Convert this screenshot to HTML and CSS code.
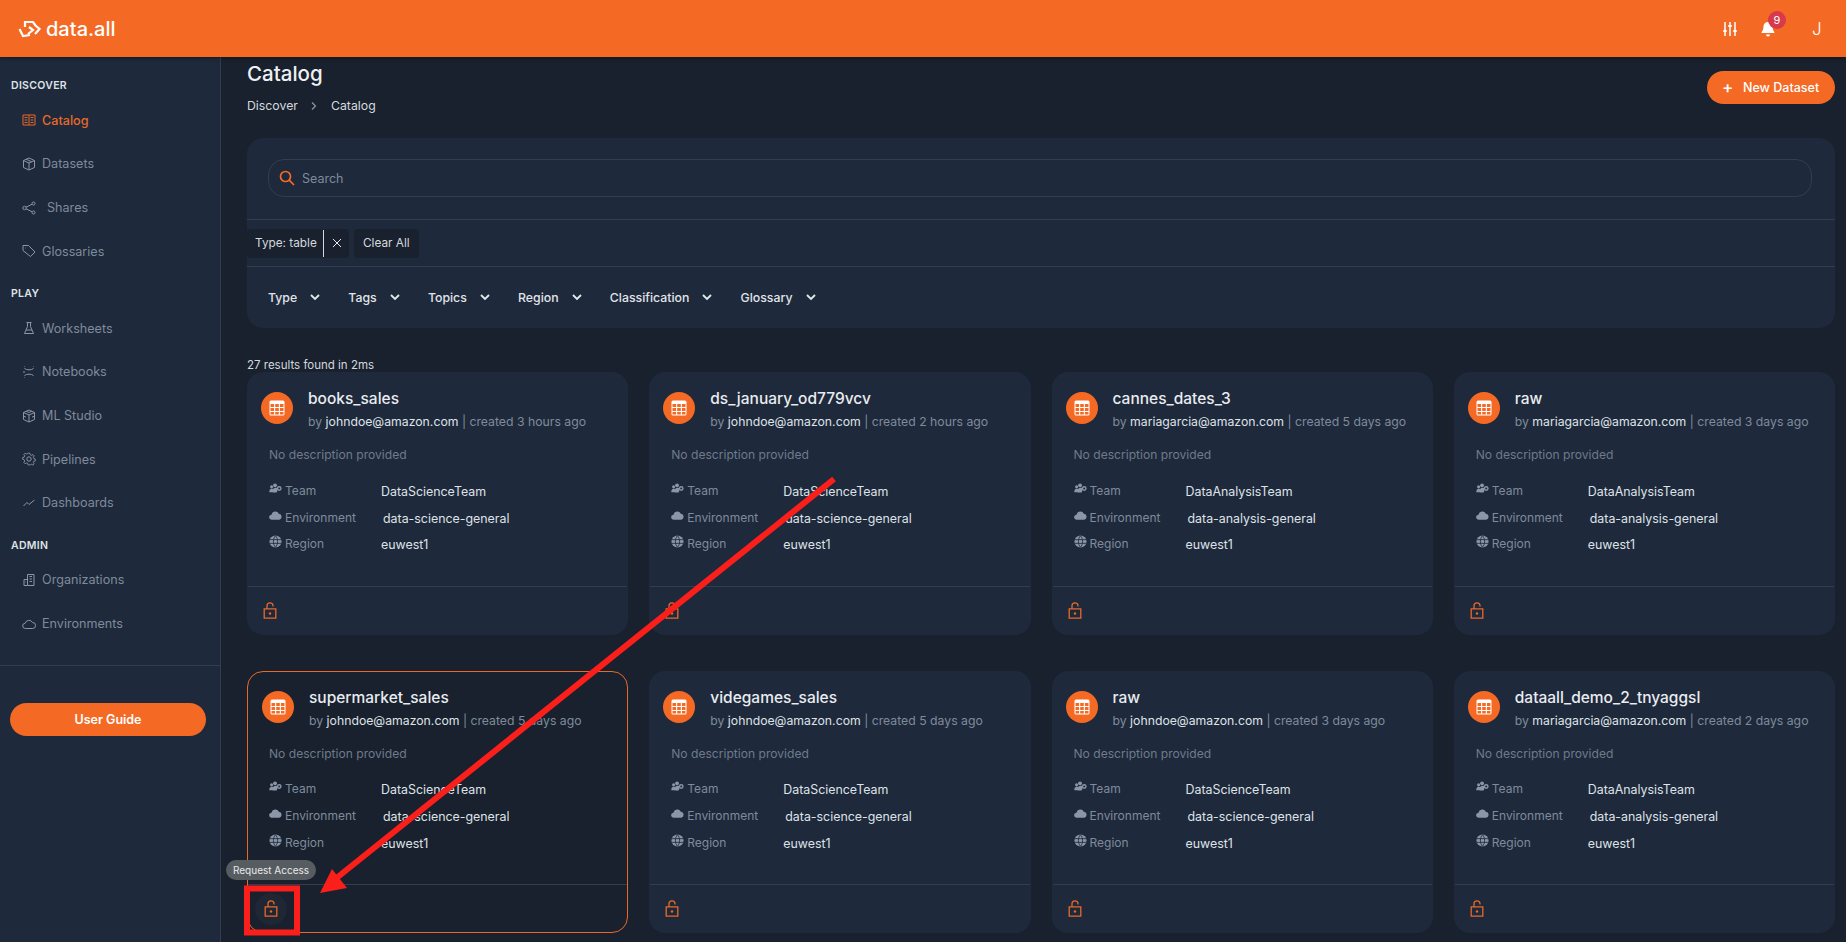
FILE: index.html
```html
<!doctype html>
<html>
<head>
<meta charset="utf-8">
<title>data.all - Catalog</title>
<link rel="stylesheet" href="styles.css">
</head>
<body>
<svg class="defs" width="0" height="0">
	<symbol id="i-table" viewBox="0 0 16 16">
		<rect x="0.5" y="0.5" width="15" height="15" rx="1.5" fill="#fff"/>
		<g fill="#f46a25">
			<rect x="1.5" y="4" width="3.6" height="3"/><rect x="6.2" y="4" width="3.6" height="3"/><rect x="10.9" y="4" width="3.6" height="3"/>
			<rect x="1.5" y="8" width="3.6" height="3"/><rect x="6.2" y="8" width="3.6" height="3"/><rect x="10.9" y="8" width="3.6" height="3"/>
			<rect x="1.5" y="12" width="3.6" height="2.5"/><rect x="6.2" y="12" width="3.6" height="2.5"/><rect x="10.9" y="12" width="3.6" height="2.5"/>
		</g>
	</symbol>
	<symbol id="i-lock" viewBox="0 0 14 17">
		<path d="M1.2 6.800h11.600v9.400H1.200z M4 6.800V3.800a3 3 0 0 1 6 0v.6" fill="none" stroke="#e8692a" stroke-width="1.300"/>
		<circle cx="7" cy="11.500" r="1.200" fill="#e8692a"/>
	</symbol>
	<symbol id="i-team" viewBox="0 0 14 12">
		<g fill="#8b97a8">
			<circle cx="2.800" cy="4.200" r="1.700"/><circle cx="6.500" cy="2.600" r="2.100"/><circle cx="11" cy="6" r="2.600"/>
			<path d="M0.300 9.500c0-2 1.200-3.300 2.500-3.300s2 .6 2 1.500v2.300H.3z M4 8.500c0-2 1.500-3.300 3-3.300s2 .5 2 1.500 0 3-1 3.500H4z"/>
		</g>
		<circle cx="11" cy="6" r="1.100" fill="#1e293b"/>
	</symbol>
	<symbol id="i-cloud" viewBox="0 0 14 10">
		<path d="M3 9.500a2.700 2.700 0 0 1-.4-5.400A4.300 4.300 0 0 1 10.600 3 3.300 3.300 0 0 1 11 9.500z" fill="#8b97a8"/>
	</symbol>
	<symbol id="i-globe" viewBox="0 0 14 14">
		<circle cx="7" cy="7" r="6.500" fill="#8b97a8"/>
		<path d="M.8 5h12.400M.8 9h12.400M7 .8C4 4 4 10 7 13.200M7 .8c3 3.200 3 9.200 0 12.400" fill="none" stroke="#1e293b" stroke-width=".9"/>
	</symbol>
	<symbol id="i-chev" viewBox="0 0 12 12">
		<path d="M2 4l4 4 4-4" fill="none" stroke="#e6e9ee" stroke-width="1.800"/>
	</symbol>
</svg>

<header class="topbar">
	<div class="brand">
		<svg class="brand-logo" viewBox="0 0 23 18" width="23" height="18">
			<path d="M7 7V2h8l2.500 3.500L21.500 9 17 14" fill="none" stroke="#fff" stroke-width="2.200"/>
			<path d="M11 7l4 3-5 4" fill="none" stroke="#fff" stroke-width="2.200"/>
			<path d="M1.500 9L5 16l7-1" fill="none" stroke="#fff" stroke-width="2.200"/>
		</svg>
		<span>data.all</span>
	</div>
	<div class="top-actions">
		<svg class="top-icon" viewBox="0 0 16 16" width="16" height="16">
			<path d="M3 1v14M8 1v14M13 1v14" stroke="#fff" stroke-width="1.500" fill="none"/>
			<path d="M1.300 9h3.400v2H1.300zM6.300 4h3.400v2H6.300zM11.300 9h3.400v2h-3.400z" fill="#fff"/>
		</svg>
		<div class="bell">
			<svg viewBox="0 0 14 16" width="14" height="16">
				<path d="M7 1a4.500 4.500 0 0 1 4.500 4.500c0 4 2 5 2 6.500H.5c0-1.500 2-2.500 2-6.500A4.500 4.500 0 0 1 7 1zM5 13.500h4a2 2 0 0 1-4 0z" fill="#fff"/>
			</svg>
			<span class="badge">9</span>
		</div>
		<span class="avatar">J</span>
	</div>
</header>

<div class="layout">
	<aside class="sidebar">
		<nav class="nav">
			<div class="nav-head">DISCOVER</div>
			<a class="nav-item active">
				<svg viewBox="0 0 14 14"><path d="M1 2h12v10H1zM7 2v10M2.500 4.500h3M2.500 7h3M2.500 9.500h3M8.500 4.500h3M8.500 7h3M8.500 9.500h3"/></svg>
				<span>Catalog</span>
			</a>
			<a class="nav-item">
				<svg viewBox="0 0 14 14"><path d="M7 1l5.500 2.500v7L7 13l-5.500-2.500v-7zM1.500 3.500L7 6l5.500-2.500M7 6v7M4.200 2.200l5.500 2.600"/></svg>
				<span>Datasets</span>
			</a>
			<a class="nav-item nav-shares">
				<svg viewBox="0 0 14 14"><circle cx="11.500" cy="2.500" r="1.500"/><circle cx="2.500" cy="7" r="1.700"/><circle cx="11.500" cy="11.500" r="1.500"/><path d="M4 6.200l6.200-3M4 7.800l6.200 3"/></svg>
				<span>Shares</span>
			</a>
			<a class="nav-item">
				<svg viewBox="0 0 14 14"><path d="M1 1.500h5.500l6.500 6.500-4.500 4.500L1 6.500zM3.500 4h.5"/></svg>
				<span>Glossaries</span>
			</a>
			<div class="nav-head">PLAY</div>
			<a class="nav-item">
				<svg viewBox="0 0 14 14"><path d="M4.500 1.500h5M5.500 1.500v4L2.500 12.500h9L8.500 5.500v-4M4 9h6"/></svg>
				<span>Worksheets</span>
			</a>
			<a class="nav-item">
				<svg viewBox="0 0 14 14"><path d="M2.500 3.500c2 1.800 7 1.800 9 0M2.500 10.500c2-1.800 7-1.800 9 0M2 6v2M2 1.500h.5M11.500 1.500h.5M2 12.500h.5"/></svg>
				<span>Notebooks</span>
			</a>
			<a class="nav-item">
				<svg viewBox="0 0 14 14"><path d="M7 1l5.500 2.500v7L7 13l-5.500-2.500v-7zM1.500 3.500L7 6l5.500-2.500M7 6v7M4.200 2.200L7 3.500l2.800-1.300M1.500 7L4 8.200M12.500 7L10 8.200"/></svg>
				<span>ML Studio</span>
			</a>
			<a class="nav-item">
				<svg viewBox="0 0 14 14"><circle cx="7" cy="7" r="2.200"/><path d="M6 1h2l.4 1.700 1.500.7 1.500-.9 1.300 1.500-.9 1.500.6 1.500 1.600.5v2l-1.600.4-.6 1.500.9 1.400-1.400 1.400-1.500-.9-1.400.6L8 14H6l-.4-1.600-1.500-.6-1.500.9-1.300-1.400.9-1.500-.6-1.500L0 7.800v-2l1.600-.4.6-1.500-.9-1.400 1.400-1.500 1.500.9 1.400-.6z" transform="translate(.7 .3) scale(.9)"/></svg>
				<span>Pipelines</span>
			</a>
			<a class="nav-item">
				<svg viewBox="0 0 14 14"><path d="M1.500 10L5 6.500l2 2L12.500 4"/></svg>
				<span>Dashboards</span>
			</a>
			<div class="nav-head">ADMIN</div>
			<a class="nav-item">
				<svg viewBox="0 0 14 14"><path d="M5.500 12.500v-11h6.500v11zM5.500 6.500H2v6h3.500M7.500 3.500h2.500M7.500 6h2.500M7.500 8.500h2.500M3.500 9h.5"/></svg>
				<span>Organizations</span>
			</a>
			<a class="nav-item">
				<svg viewBox="0 0 14 14"><path d="M3.500 11.500a2.600 2.600 0 0 1-.4-5.200A4 4 0 0 1 10.500 5.500a3 3 0 0 1 .2 6z"/></svg>
				<span>Environments</span>
			</a>
		</nav>
		<div class="side-foot">
			<button class="btn-guide">User Guide</button>
		</div>
	</aside>

	<main class="main">
		<div class="page-head">
			<div>
				<h1 class="page-title">Catalog</h1>
				<div class="crumbs">
					<span>Discover</span>
					<svg viewBox="0 0 10 10" width="10" height="10"><path d="M3 1.500L6.500 5 3 8.500" fill="none" stroke="#8b97a8" stroke-width="1.200"/></svg>
					<span>Catalog</span>
				</div>
			</div>
			<button class="btn-new"><span class="plus">+</span>New Dataset</button>
		</div>

		<section class="search-panel">
			<div class="search-row">
				<div class="search-box">
					<svg viewBox="0 0 16 16" width="16" height="16"><circle cx="6.500" cy="6.500" r="5" fill="none" stroke="#f46a25" stroke-width="1.700"/><path d="M10.200 10.200L15 15" stroke="#f46a25" stroke-width="1.700"/></svg>
					<span>Search</span>
				</div>
			</div>
			<div class="chip-row">
				<div class="chip">
					<span class="chip-label">Type: table</span>
					<span class="chip-x"><svg viewBox="0 0 10 10" width="10" height="10"><path d="M1 1l8 8M9 1l-8 8" stroke="#e6e9ee" stroke-width="1"/></svg></span>
				</div>
				<div class="chip chip-clear">Clear All</div>
			</div>
			<div class="filter-row">
				<div class="filter">Type<svg><use href="#i-chev"/></svg></div>
				<div class="filter">Tags<svg><use href="#i-chev"/></svg></div>
				<div class="filter">Topics<svg><use href="#i-chev"/></svg></div>
				<div class="filter">Region<svg><use href="#i-chev"/></svg></div>
				<div class="filter">Classification<svg><use href="#i-chev"/></svg></div>
				<div class="filter">Glossary<svg><use href="#i-chev"/></svg></div>
			</div>
		</section>

		<div class="result-count">27 results found in 2ms</div>

		<section class="cards">
			<article class="card">
				<div class="card-head">
					<div class="card-icon"><svg><use href="#i-table"/></svg></div>
					<div>
						<div class="card-title">books_sales</div>
						<div class="card-sub">by <b>johndoe@amazon.com</b> | created 3 hours ago</div>
					</div>
				</div>
				<div class="card-desc">No description provided</div>
				<div class="card-meta">
					<div class="meta-row"><span class="meta-label"><svg><use href="#i-team"/></svg>Team</span><span class="meta-value">DataScienceTeam</span></div>
					<div class="meta-row"><span class="meta-label"><svg><use href="#i-cloud"/></svg>Environment</span><span class="meta-value env">data-science-general</span></div>
					<div class="meta-row"><span class="meta-label"><svg><use href="#i-globe"/></svg>Region</span><span class="meta-value">euwest1</span></div>
				</div>
				<div class="card-foot"><span class="lock"><svg><use href="#i-lock"/></svg></span></div>
			</article>

			<article class="card">
				<div class="card-head">
					<div class="card-icon"><svg><use href="#i-table"/></svg></div>
					<div>
						<div class="card-title">ds_january_od779vcv</div>
						<div class="card-sub">by <b>johndoe@amazon.com</b> | created 2 hours ago</div>
					</div>
				</div>
				<div class="card-desc">No description provided</div>
				<div class="card-meta">
					<div class="meta-row"><span class="meta-label"><svg><use href="#i-team"/></svg>Team</span><span class="meta-value">DataScienceTeam</span></div>
					<div class="meta-row"><span class="meta-label"><svg><use href="#i-cloud"/></svg>Environment</span><span class="meta-value env">data-science-general</span></div>
					<div class="meta-row"><span class="meta-label"><svg><use href="#i-globe"/></svg>Region</span><span class="meta-value">euwest1</span></div>
				</div>
				<div class="card-foot"><span class="lock"><svg><use href="#i-lock"/></svg></span></div>
			</article>

			<article class="card">
				<div class="card-head">
					<div class="card-icon"><svg><use href="#i-table"/></svg></div>
					<div>
						<div class="card-title">cannes_dates_3</div>
						<div class="card-sub">by <b>mariagarcia@amazon.com</b> | created 5 days ago</div>
					</div>
				</div>
				<div class="card-desc">No description provided</div>
				<div class="card-meta">
					<div class="meta-row"><span class="meta-label"><svg><use href="#i-team"/></svg>Team</span><span class="meta-value">DataAnalysisTeam</span></div>
					<div class="meta-row"><span class="meta-label"><svg><use href="#i-cloud"/></svg>Environment</span><span class="meta-value env">data-analysis-general</span></div>
					<div class="meta-row"><span class="meta-label"><svg><use href="#i-globe"/></svg>Region</span><span class="meta-value">euwest1</span></div>
				</div>
				<div class="card-foot"><span class="lock"><svg><use href="#i-lock"/></svg></span></div>
			</article>

			<article class="card">
				<div class="card-head">
					<div class="card-icon"><svg><use href="#i-table"/></svg></div>
					<div>
						<div class="card-title">raw</div>
						<div class="card-sub">by <b>mariagarcia@amazon.com</b> | created 3 days ago</div>
					</div>
				</div>
				<div class="card-desc">No description provided</div>
				<div class="card-meta">
					<div class="meta-row"><span class="meta-label"><svg><use href="#i-team"/></svg>Team</span><span class="meta-value">DataAnalysisTeam</span></div>
					<div class="meta-row"><span class="meta-label"><svg><use href="#i-cloud"/></svg>Environment</span><span class="meta-value env">data-analysis-general</span></div>
					<div class="meta-row"><span class="meta-label"><svg><use href="#i-globe"/></svg>Region</span><span class="meta-value">euwest1</span></div>
				</div>
				<div class="card-foot"><span class="lock"><svg><use href="#i-lock"/></svg></span></div>
			</article>

			<article class="card card-hover">
				<div class="card-head">
					<div class="card-icon"><svg><use href="#i-table"/></svg></div>
					<div>
						<div class="card-title">supermarket_sales</div>
						<div class="card-sub">by <b>johndoe@amazon.com</b> | created 5 days ago</div>
					</div>
				</div>
				<div class="card-desc">No description provided</div>
				<div class="card-meta">
					<div class="meta-row"><span class="meta-label"><svg><use href="#i-team"/></svg>Team</span><span class="meta-value">DataScienceTeam</span></div>
					<div class="meta-row"><span class="meta-label"><svg><use href="#i-cloud"/></svg>Environment</span><span class="meta-value env">data-science-general</span></div>
					<div class="meta-row"><span class="meta-label"><svg><use href="#i-globe"/></svg>Region</span><span class="meta-value">euwest1</span></div>
				</div>
				<div class="card-foot">
					<span class="lock lock-hover"><svg><use href="#i-lock"/></svg></span>
					<span class="tooltip">Request Access</span>
				</div>
			</article>

			<article class="card">
				<div class="card-head">
					<div class="card-icon"><svg><use href="#i-table"/></svg></div>
					<div>
						<div class="card-title">videgames_sales</div>
						<div class="card-sub">by <b>johndoe@amazon.com</b> | created 5 days ago</div>
					</div>
				</div>
				<div class="card-desc">No description provided</div>
				<div class="card-meta">
					<div class="meta-row"><span class="meta-label"><svg><use href="#i-team"/></svg>Team</span><span class="meta-value">DataScienceTeam</span></div>
					<div class="meta-row"><span class="meta-label"><svg><use href="#i-cloud"/></svg>Environment</span><span class="meta-value env">data-science-general</span></div>
					<div class="meta-row"><span class="meta-label"><svg><use href="#i-globe"/></svg>Region</span><span class="meta-value">euwest1</span></div>
				</div>
				<div class="card-foot"><span class="lock"><svg><use href="#i-lock"/></svg></span></div>
			</article>

			<article class="card">
				<div class="card-head">
					<div class="card-icon"><svg><use href="#i-table"/></svg></div>
					<div>
						<div class="card-title">raw</div>
						<div class="card-sub">by <b>johndoe@amazon.com</b> | created 3 days ago</div>
					</div>
				</div>
				<div class="card-desc">No description provided</div>
				<div class="card-meta">
					<div class="meta-row"><span class="meta-label"><svg><use href="#i-team"/></svg>Team</span><span class="meta-value">DataScienceTeam</span></div>
					<div class="meta-row"><span class="meta-label"><svg><use href="#i-cloud"/></svg>Environment</span><span class="meta-value env">data-science-general</span></div>
					<div class="meta-row"><span class="meta-label"><svg><use href="#i-globe"/></svg>Region</span><span class="meta-value">euwest1</span></div>
				</div>
				<div class="card-foot"><span class="lock"><svg><use href="#i-lock"/></svg></span></div>
			</article>

			<article class="card">
				<div class="card-head">
					<div class="card-icon"><svg><use href="#i-table"/></svg></div>
					<div>
						<div class="card-title">dataall_demo_2_tnyaggsl</div>
						<div class="card-sub">by <b>mariagarcia@amazon.com</b> | created 2 days ago</div>
					</div>
				</div>
				<div class="card-desc">No description provided</div>
				<div class="card-meta">
					<div class="meta-row"><span class="meta-label"><svg><use href="#i-team"/></svg>Team</span><span class="meta-value">DataAnalysisTeam</span></div>
					<div class="meta-row"><span class="meta-label"><svg><use href="#i-cloud"/></svg>Environment</span><span class="meta-value env">data-analysis-general</span></div>
					<div class="meta-row"><span class="meta-label"><svg><use href="#i-globe"/></svg>Region</span><span class="meta-value">euwest1</span></div>
				</div>
				<div class="card-foot"><span class="lock"><svg><use href="#i-lock"/></svg></span></div>
			</article>
		</section>
	</main>
</div>

<svg class="markup" viewBox="0 0 1846 942" width="1846" height="942">
	<path d="M834 479L334 880" stroke="#fa1f1a" stroke-width="6" fill="none"/>
	<path d="M320 893L332 869L347 888z" fill="#fa1f1a"/>
	<rect x="247" y="888.500" width="50" height="44" fill="none" stroke="#fa1f1a" stroke-width="6"/>
</svg>
</body>
</html>
```

FILE: styles.css
```css
*{margin:0;padding:0;box-sizing:border-box;}
html,body{height:100%;overflow:hidden;}
body{background:#18212d;color:#e6e9ee;font-family:Inter,"Liberation Sans",sans-serif;font-size:12px;display:flex;flex-direction:column;position:relative;}
.defs{position:absolute;}

/* top bar */
.topbar{height:57px;flex:none;background:#f46a25;display:flex;align-items:center;justify-content:space-between;padding:0 26px 0 18px;box-shadow:0 1px 4px rgba(0,0,0,.4);position:relative;z-index:2;}
.brand{display:flex;align-items:center;gap:5px;color:#fff;font-size:20px;font-weight:500;}
.brand-logo{display:block;}
.top-actions{display:flex;align-items:center;}
.top-icon{display:block;}
.bell{position:relative;margin-left:23px;display:flex;}
.badge{position:absolute;left:7px;top:-10px;width:18px;height:18px;border-radius:50%;background:#d8394b;color:#fff;font-size:11px;text-align:center;line-height:18px;}
.avatar{margin-left:37px;color:#fff;font-size:17px;font-weight:300;width:8px;}

.layout{flex:1;display:flex;min-height:0;}

/* sidebar */
.sidebar{width:221px;flex:none;background:#1e293b;border-right:1px solid #323e50;display:flex;flex-direction:column;}
.nav{height:609px;padding-top:20px;border-bottom:1px solid #323e50;}
.nav-head{height:18px;line-height:18px;padding-left:11px;font-size:10.500px;font-weight:600;color:#dfe3e8;letter-spacing:.3px;margin-bottom:3.600px;}
.nav-item{height:43.600px;display:flex;align-items:center;gap:6px;padding-left:22px;color:#7f8b9c;font-size:12.600px;}
.nav-item svg{width:14px;height:14px;fill:none;stroke:#8b97a8;stroke-width:1;flex:none;}
.nav-item.active{color:#e8692a;font-weight:500;}
.nav-item.active svg{stroke:#e8692a;}
.nav-shares{gap:11px;}
.nav-item + .nav-head{margin-top:12px;}
.side-foot{padding:37px 14px 0 10px;}
.btn-guide{width:196px;height:33px;border:0;border-radius:17px;background:#f46a25;color:#fff;font:600 12.500px Inter,"Liberation Sans",sans-serif;}

/* main */
.main{flex:1;min-width:0;padding:0 11px 0 26px;overflow:hidden;}
.page-head{height:81px;display:flex;justify-content:space-between;}
.page-title{font-size:20.500px;font-weight:500;line-height:24px;margin-top:5px;color:#eef0f3;}
.crumbs{display:flex;align-items:center;margin-top:11px;font-size:12.300px;line-height:18px;color:#d5d9df;}
.crumbs svg{margin:0 12px 0 11px;}
.btn-new{width:128px;height:33px;margin-top:14px;border:0;border-radius:17px;background:#f46a25;color:#fff;font:500 12.500px Inter,"Liberation Sans",sans-serif;display:flex;align-items:center;padding-left:15px;}
.plus{font-size:17px;font-weight:500;width:21px;text-align:left;line-height:17px;}

/* search panel */
.search-panel{height:190px;background:#1e293b;border-radius:16px;overflow:hidden;}
.search-row{height:82px;padding:21px 23px 21px 21px;border-bottom:1px solid #323e50;}
.search-box{height:38px;border:1px solid #323e50;border-radius:16px;display:flex;align-items:center;gap:7px;padding-left:10px;color:#7f8b9c;font-size:12.500px;}
.chip-row{height:47px;border-bottom:1px solid #323e50;display:flex;align-items:center;gap:5px;}
.chip{height:29px;background:#18212d;border-radius:4px;display:flex;align-items:center;color:#d5d9df;font-size:11.800px;}
.chip-label{width:77px;height:27px;line-height:27px;padding-left:8px;border-right:1px solid #d5d9df;}
.chip-x{width:25px;display:flex;justify-content:center;}
.chip-clear{padding:0 9px;}
.filter-row{height:60px;display:flex;align-items:center;padding-left:21px;gap:27.200px;}
.filter{display:flex;align-items:center;gap:12px;font-size:12.300px;font-weight:500;color:#e1e4e9;}
.filter svg{width:12px;height:12px;}

.result-count{height:17px;margin-top:29px;line-height:17px;font-size:11.500px;color:#d5d9df;}

/* cards */
.cards{display:grid;grid-template-columns:repeat(4,1fr);grid-auto-rows:262.500px;column-gap:21px;row-gap:36px;margin-top:-2px;}
.card{background:#1e293b;border:1px solid transparent;border-radius:16px;display:flex;flex-direction:column;position:relative;}
.card-hover{background:#18212d;border-color:#e8692a;}
.card-hover .card-head{padding-left:14px;}
.card-head{display:flex;height:55px;padding:16px 0 0 13px;box-sizing:content-box;}
.card-icon{width:32px;height:32px;margin-top:3px;margin-right:15px;border-radius:50%;background:#f46a25;display:flex;align-items:center;justify-content:center;flex:none;}
.card-icon svg{width:16px;height:16px;}
.card-title{font-size:15.500px;font-weight:500;line-height:20px;color:#e9ecf0;}
.card-sub{font-size:12.250px;line-height:20px;margin-top:3px;color:#7f8b9c;white-space:nowrap;}
.card-sub b{font-weight:400;color:#dfe3e8;}
.card-desc{height:20px;line-height:20px;margin-left:21px;margin-top:1px;color:#6f7b8c;font-size:12.100px;}
.card-meta{margin:12px 0 0 21px;flex:1;}
.meta-row{height:26.700px;display:flex;align-items:center;}
.meta-label{width:112px;display:flex;align-items:center;gap:3px;color:#7f8b9c;font-size:12px;}
.meta-label svg{width:13px;height:13px;flex:none;position:relative;top:-2px;}
.meta-value{color:#dfe3e8;font-size:12.400px;position:relative;top:1px;}
.meta-value.env{margin-left:2px;}
.card-foot{height:48px;flex:none;border-top:1px solid #323e50;padding-left:6px;display:flex;align-items:center;position:relative;}
.lock{width:32px;height:32px;border-radius:50%;display:flex;align-items:center;justify-content:center;}
.lock svg{width:14px;height:17px;}
.lock-hover{background:#1e2733;margin-left:1px;}
.tooltip{position:absolute;left:-22px;top:-25px;height:20px;line-height:20px;padding:0 7px;background:#575c61;color:#e8eaec;font-size:10px;border-radius:10px;white-space:nowrap;z-index:1;}

/* red annotation drawn over the screenshot */
.markup{position:absolute;left:0;top:0;pointer-events:none;z-index:3;}
```
